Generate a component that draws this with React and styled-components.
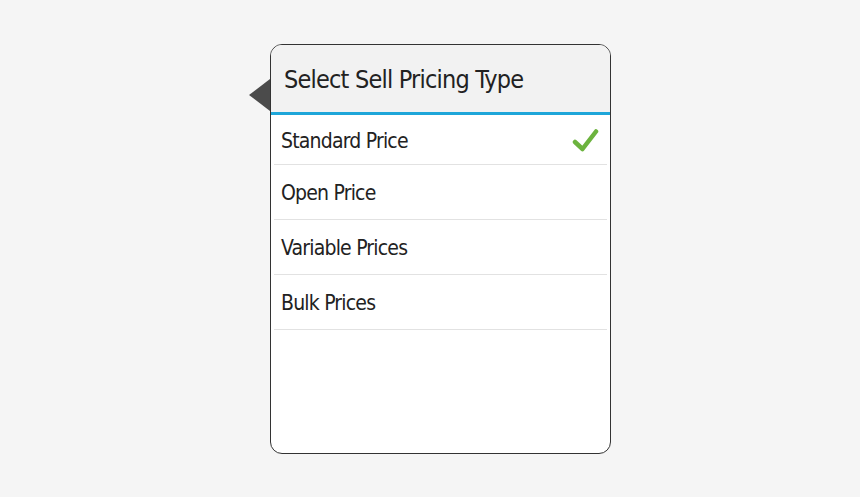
import React from 'react';
import styled, { createGlobalStyle } from 'styled-components';

const GlobalStyle = createGlobalStyle`
  html, body {
    margin: 0;
    padding: 0;
    background: #f5f5f5;
  }
  body {
    font-family: 'Liberation Sans Narrow', 'DejaVu Sans Condensed', 'Liberation Sans', sans-serif;
  }
`;

const options = [
  { label: 'Standard Price', selected: true },
  { label: 'Open Price' },
  { label: 'Variable Prices' },
  { label: 'Bulk Prices' },
];

const CheckIcon = () => (
  <svg width="27" height="25" viewBox="0 0 27 25">
    <path
      d="M3 14 L10.5 21 L24 3.5"
      fill="none"
      stroke="#6cb33e"
      strokeWidth="4.5"
      strokeLinecap="round"
      strokeLinejoin="round"
    />
  </svg>
);

const App = () => {
  return (
    <Page>
      <GlobalStyle />
      <Popover>
        <Pointer />
        <Header>
          <Title>Select Sell Pricing Type</Title>
        </Header>
        <List>
          {options.map((o) => (
            <Row key={o.label}>
              <RowLabel>{o.label}</RowLabel>
              {o.selected && <CheckIcon />}
            </Row>
          ))}
        </List>
      </Popover>
    </Page>
  );
};

export default App;

const Page = styled.div`
  width: 860px;
  height: 497px;
  display: flex;
  align-items: flex-start;
  padding: 44px 0 0 270px;
  box-sizing: border-box;
`;

const Popover = styled.div`
  position: relative;
  width: 341px;
  height: 410px;
  box-sizing: border-box;
  border: 1px solid #333;
  border-radius: 12px;
  background: #fff;
  display: flex;
  flex-direction: column;
`;

const Pointer = styled.div`
  position: absolute;
  left: -22px;
  top: 34px;
  width: 0;
  height: 0;
  border-top: 16px solid transparent;
  border-bottom: 16px solid transparent;
  border-right: 21px solid #4b4b4b;
`;

const Header = styled.div`
  height: 67px;
  background: #f2f2f2;
  border-radius: 11px 11px 0 0;
  border-bottom: 3px solid #1ea6d9;
  display: flex;
  align-items: center;
  padding: 0 13px;
`;

const Title = styled.h1`
  margin: 0;
  font-size: 25px;
  letter-spacing: -0.8px;
  font-weight: normal;
  color: #222;
  padding-top: 1px;
`;

const List = styled.div`
  display: flex;
  flex-direction: column;
  padding: 0 3px;
`;

const Row = styled.div`
  height: 55px;
  border-bottom: 1px solid #e2e2e2;
  display: flex;
  align-items: center;
  justify-content: space-between;
  padding: 2px 8px 0 7px;
  box-sizing: border-box;

  &:first-child {
    height: 50px;
  }
`;

const RowLabel = styled.span`
  font-size: 21px;
  letter-spacing: -0.8px;
  color: #222;
`;
